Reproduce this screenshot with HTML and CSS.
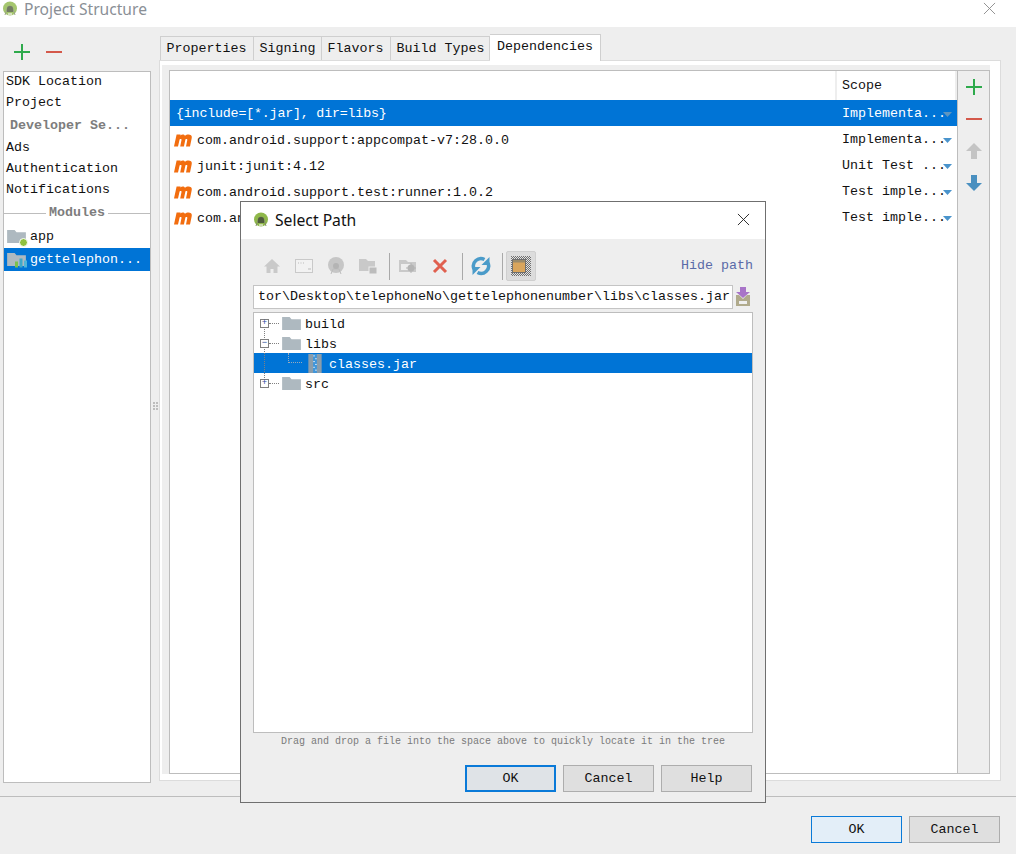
FILE: index.html
```html
<!DOCTYPE html>
<html lang="en">
<head>
<meta charset="utf-8">
<title>Project Structure</title>
<link rel="stylesheet" href="styles.css">
</head>
<body>
<svg class="sprites" width="0" height="0">
  <defs>
    <symbol id="droid" viewBox="0 0 16 16">
      <circle cx="8" cy="7.500" r="7" fill="#8fb84a"/>
      <path d="M3 14 5 8a3 3 0 0 1 6 0l2 6" fill="none" stroke="#7f8a68"/>
      <path d="M5 8a3 3 0 0 1 6 0v3H5z" fill="#4f5b3c"/>
      <path d="M6 13h4" stroke="#dfe6d0" stroke-width="1.500"/>
    </symbol>
    <symbol id="folder" viewBox="0 0 20 16">
      <path d="M0 1h8l2 2.500h10V15H0z" fill="#aeb9c0"/>
    </symbol>
    <symbol id="mvn" viewBox="0 0 18 14">
      <path d="M0 13.500 2.600 1.500H6.600L6.400 2.600C7.600 1.300 10 1 11 2.800 12.400 1.200 15.500 1 17 2.200 18 3 17.900 4.500 17.600 5.800L16 13.500H12L13.300 7C13.500 5.800 12.200 5.600 11.400 6.400L9.900 13.500H6.200L7.500 7C7.700 5.800 6.400 5.600 5.600 6.400L4 13.500z" fill="#f26d0f"/>
    </symbol>
    <symbol id="arrow" viewBox="0 0 9 5">
      <path d="M0 0h9L4.500 5z"/>
    </symbol>
    <pattern id="checker" width="2" height="2" patternUnits="userSpaceOnUse">
      <rect width="2" height="2" fill="#e2e2e2"/>
      <rect width="1" height="1" fill="#6f6f6f"/>
      <rect x="1" y="1" width="1" height="1" fill="#6f6f6f"/>
    </pattern>
  </defs>
</svg>

<div class="window">
  <header class="titlebar">
    <svg class="title-logo"><use href="#droid"/></svg>
    <span class="title-text">Project Structure</span>
    <svg class="title-close" viewBox="0 0 14 14"><path d="M1 1l12 12M13 1 1 13" stroke="#8b8b8b" fill="none"/></svg>
  </header>

  <div class="content">
    <aside class="sidebar">
      <div class="side-tools">
        <svg class="tool" viewBox="0 0 16 16"><path d="M8 0v16M0 8h16" stroke="#2eaa4c" stroke-width="2"/></svg>
        <svg class="tool" viewBox="0 0 16 16"><path d="M0 8h16" stroke="#d4584a" stroke-width="2"/></svg>
      </div>
      <div class="side-list">
        <div class="side-item side-item-first">SDK Location</div>
        <div class="side-item">Project</div>
        <div class="side-heading">Developer Se...</div>
        <div class="side-item side-item-low">Ads</div>
        <div class="side-item">Authentication</div>
        <div class="side-item">Notifications</div>
        <div class="side-sep"><span>Modules</span></div>
        <div class="module">
          <span class="module-icon">
            <svg class="folder-icon"><use href="#folder"/></svg>
            <i class="module-dot"></i>
          </span>
          app
        </div>
        <div class="module module-active">
          <span class="module-icon">
            <svg class="folder-icon"><use href="#folder"/></svg>
            <svg class="module-bars" viewBox="0 0 12 10"><path d="M0 4h3v6H0z" fill="#7cc04b"/><path d="M4.500 1h3v9h-3z" fill="#3fa9c9"/><path d="M9 3h3v7H9z" fill="#4fb6d8"/></svg>
          </span>
          gettelephon...
        </div>
      </div>
    </aside>

    <div class="splitter"><i></i><i></i><i></i><i></i><i></i><i></i></div>

    <main class="main">
      <nav class="tabs">
        <span class="tab">Properties</span>
        <span class="tab">Signing</span>
        <span class="tab tab-flavors">Flavors</span>
        <span class="tab tab-build">Build Types</span>
        <span class="tab tab-active">Dependencies</span>
      </nav>
      <section class="panel">
        <div class="panel-inner">
          <div class="table-box">
            <div class="table">
              <div class="thead">
                <div class="th-name"></div>
                <div class="th-scope">Scope</div>
              </div>
              <div class="row row-active">
                <div class="cell-name cell-plain">{include=[*.jar], dir=libs}</div>
                <div class="cell-scope">Implementa...<svg class="scope-arrow"><use href="#arrow"/></svg></div>
              </div>
              <div class="row">
                <div class="cell-name"><svg class="mvn"><use href="#mvn"/></svg>com.android.support:appcompat-v7:28.0.0</div>
                <div class="cell-scope">Implementa...<svg class="scope-arrow"><use href="#arrow"/></svg></div>
              </div>
              <div class="row">
                <div class="cell-name"><svg class="mvn"><use href="#mvn"/></svg>junit:junit:4.12</div>
                <div class="cell-scope">Unit Test ...<svg class="scope-arrow"><use href="#arrow"/></svg></div>
              </div>
              <div class="row">
                <div class="cell-name"><svg class="mvn"><use href="#mvn"/></svg>com.android.support.test:runner:1.0.2</div>
                <div class="cell-scope">Test imple...<svg class="scope-arrow"><use href="#arrow"/></svg></div>
              </div>
              <div class="row">
                <div class="cell-name"><svg class="mvn"><use href="#mvn"/></svg>com.an</div>
                <div class="cell-scope">Test imple...<svg class="scope-arrow"><use href="#arrow"/></svg></div>
              </div>
            </div>
            <div class="table-tools">
              <svg class="tt" viewBox="0 0 16 16"><path d="M8 0v16M0 8h16" stroke="#2eaa4c" stroke-width="2"/></svg>
              <svg class="tt" viewBox="0 0 16 16"><path d="M0 8h16" stroke="#d4584a" stroke-width="2"/></svg>
              <svg class="tt" viewBox="0 0 16 16"><path d="M8 0l8 8h-5v8H5V8H0z" fill="#c4c4c4"/></svg>
              <svg class="tt" viewBox="0 0 16 16"><path d="M8 16 0 8h5V0h6v8h5z" fill="#4a90c0"/></svg>
            </div>
          </div>
        </div>
      </section>
    </main>
  </div>

  <footer class="footer">
    <button class="btn btn-primary">OK</button>
    <button class="btn">Cancel</button>
  </footer>
</div>

<div class="dialog">
  <header class="dlg-title">
    <svg class="dlg-logo"><use href="#droid"/></svg>
    <span class="dlg-title-text">Select Path</span>
    <svg class="dlg-close" viewBox="0 0 14 14"><path d="M1 1l12 12M13 1 1 13" stroke="#222" fill="none"/></svg>
  </header>
  <div class="dlg-body">
    <div class="dlg-toolbar">
      <svg class="ic" viewBox="0 0 18 18"><path d="M9 2 1 9.500h2.500V16h4v-4h3v4h4V9.500H17z" fill="#c9c9c9"/></svg>
      <svg class="ic" viewBox="0 0 18 18"><rect x="0.500" y="2.500" width="17" height="13" fill="#f2f2f2" stroke="#c9c9c9"/><path d="M3 6h1M5.500 6h1M8 6h1M13 12h3" stroke="#bbb"/></svg>
      <svg class="ic" viewBox="0 0 18 18"><circle cx="9" cy="8" r="8" fill="#c6c6c6"/><path d="M4 17l2-5h6l2 5" fill="none" stroke="#bdbdbd"/><circle cx="9" cy="9" r="3" fill="#b4b4b4"/></svg>
      <svg class="ic" viewBox="0 0 18 18"><path d="M0 2h7l2 2h7v10H0z" fill="#c9c9c9"/><rect x="10" y="10" width="8" height="7" fill="#bcbcbc" stroke="#eee"/></svg>
      <span class="tb-sep"></span>
      <svg class="ic" viewBox="0 0 18 18"><path d="M0 3h7l2 2h8v10H0z" fill="#c9c9c9"/><rect x="2" y="7" width="10" height="6" fill="#eee"/><circle cx="12" cy="11" r="3.500" fill="#b4b4b4"/><path d="M12 6v10M7 11h10" stroke="#b4b4b4"/></svg>
      <svg class="ic ic-del" viewBox="0 0 18 18"><path d="M3 3l12 12M15 3 3 15" stroke="#e0604f" stroke-width="3"/></svg>
      <span class="tb-sep"></span>
      <svg class="ic ic-sync" viewBox="0 0 20 20"><path d="M3 13A7.500 7.500 0 0 1 13.500 3.500" fill="none" stroke="#4a9bc9" stroke-width="3.500"/><path d="M17 7A7.500 7.500 0 0 1 6.500 16.500" fill="none" stroke="#4a9bc9" stroke-width="3.500"/><path d="M18.500 1v8h-8zM1.500 19v-8h8z" fill="#4a9bc9"/></svg>
      <span class="tb-sep"></span>
      <span class="tb-toggle">
        <svg class="ic-toggle" viewBox="0 0 20 20"><rect width="20" height="20" fill="url(#checker)"/><rect x="1.500" y="3.500" width="13" height="13" fill="#d9a55c" stroke="#6f6f6f"/><rect x="2" y="4" width="12" height="2.500" fill="#9a8a6a"/></svg>
      </span>
      <a class="hide-path">Hide path</a>
    </div>

    <div class="path-row">
      <div class="path-input">tor\Desktop\telephoneNo\gettelephonenumber\libs\classes.jar</div>
      <svg class="path-icon" viewBox="0 0 16 20"><path d="M5 0h6v5h4l-7 6-7-6h4z" fill="#a874c8"/><path d="M1 8h3l4 4 4-4h3v11H1z" fill="#b0aa8c"/><rect x="4" y="14" width="8" height="3" fill="#eee"/></svg>
    </div>

    <div class="tree">
      <div class="tree-row">
        <span class="expander">+</span><span class="dots"></span>
        <svg class="tree-folder"><use href="#folder"/></svg><span class="tree-label">build</span>
      </div>
      <div class="tree-row">
        <span class="expander">−</span><span class="dots"></span>
        <svg class="tree-folder"><use href="#folder"/></svg><span class="tree-label">libs</span>
      </div>
      <div class="tree-row tree-row-active">
        <span class="elbow"></span>
        <svg class="jar" viewBox="0 0 14 20"><rect width="14" height="20" fill="#8a9dab"/><rect x="5" width="4" height="20" fill="#3f96db"/><path d="M5 2h2M7 5h2M5 8h2M7 11h2M5 14h2M7 17h2" stroke="#cfe3f2"/></svg>
        <span class="tree-label">classes.jar</span>
      </div>
      <div class="tree-row">
        <span class="expander">+</span><span class="dots"></span>
        <svg class="tree-folder"><use href="#folder"/></svg><span class="tree-label">src</span>
      </div>
      <span class="tree-spine"></span>
    </div>

    <p class="hint">Drag and drop a file into the space above to quickly locate it in the tree</p>

    <div class="dlg-buttons">
      <button class="btn dlg-btn dlg-btn-primary">OK</button>
      <button class="btn dlg-btn">Cancel</button>
      <button class="btn dlg-btn">Help</button>
    </div>
  </div>
</div>
</body>
</html>
```
FILE: styles.css
```css
* { box-sizing: border-box; }
html, body { margin: 0; height: 100%; }
body {
  position: relative;
  width: 1016px;
  height: 854px;
  overflow: hidden;
  background: #eeeeee;
  color: #111;
  font: 13.33px/16px "Liberation Mono", monospace;
}
.sprites { position: absolute; }
.window { display: flex; flex-direction: column; height: 854px; }

.titlebar { display: flex; align-items: center; height: 27px; background: #fff; padding: 0 20px 8px 2px; flex: none; }
.title-logo { width: 16px; height: 16px; opacity: .8; margin-top: -2px; }
.title-text { margin-left: 6px; font: 15.6px/17px "Noto Sans", sans-serif; color: #8a8f96; }
.title-close { width: 13px; height: 13px; margin: -2px 0 0 auto; }

.content { display: flex; height: 769px; flex: none; padding-left: 3px; }
.sidebar { width: 148px; display: flex; flex-direction: column; flex: none; }
.side-tools { display: flex; align-items: center; gap: 16px; height: 44px; padding: 6px 0 0 11px; flex: none; }
.tool { width: 16px; height: 16px; }
.side-list { height: 712px; background: #fff; border: 1px solid #bdbdbd; flex: none; }
.side-item { height: 21.500px; padding-left: 2px; line-height: 20px; }
.side-item-first { height: 20.500px; }
.side-item-low { padding-top: 1px; }
.side-heading { height: 23px; padding-left: 6px; line-height: 24px; font-weight: 700; color: #7d7d7d; }
.side-sep { display: flex; align-items: center; height: 23.500px; gap: 3px; font-weight: 700; color: #7d7d7d; }
.side-sep::before, .side-sep::after { content: ""; flex: 1; height: 1px; background: #bdbdbd; }
.module { display: flex; align-items: center; height: 23px; padding-left: 3px; }
.module-icon { position: relative; width: 23px; height: 16px; flex: none; }
.folder-icon { position: absolute; left: 0; top: 0; width: 19px; height: 15px; }
.module-dot { position: absolute; left: 12px; top: 9px; width: 7px; height: 7px; border-radius: 50%; background: #8fc13e; border: 1px solid #fff; box-sizing: content-box; }
.module-bars { position: absolute; left: 8px; top: 5px; width: 12px; height: 11px; }
.module-active { background: #0074d6; color: #fff; }

.splitter { width: 8px; display: grid; grid-template-columns: 2px 2px; gap: 1px; align-content: center; justify-content: center; padding-bottom: 12px; flex: none; }
.splitter i { width: 2px; height: 2px; background: #bdbdbd; }

.main { flex: none; width: 845px; padding-top: 9px; }
.tabs { display: flex; height: 24px; padding-left: 1px; align-items: flex-end; }
.tab { height: 24px; padding: 0 5.500px; line-height: 23px; border: 1px solid #cfcfcf; border-left-width: 0; border-bottom: 0; background: #eeeeee; }
.tab:first-child { border-left-width: 1px; padding-right: 6.500px; }
.tab-flavors { padding-right: 6.500px; }
.tab-build { padding-right: 4.500px; }
.tab-active { position: relative; z-index: 1; height: 27px; margin-bottom: -1px; background: #fff; line-height: 24px; padding: 0 7px; }
.panel { width: 842px; height: 721px; background: #fff; border: 1px solid #dcdcdc; padding: 4px 10px 6px 2px; }
.panel-inner { height: 709px; background: #eeeeee; padding: 5px 0 0 7px; }
.table-box { display: flex; height: 704px; border: 1px solid #bdbdbd; }
.table { flex: 1; background: #fff; min-width: 0; }
.thead { display: flex; height: 29px; }
.th-name { flex: 1; }
.th-scope { width: 122px; padding-left: 5px; line-height: 30px; border-left: 2px solid #eee; border-right: 2px solid #eee; background: #fff; }
.row { display: flex; height: 26px; align-items: center; padding-top: 2px; }
.row-active { background: #0074d6; color: #fff; }
.cell-name { flex: 1; display: flex; align-items: center; padding: 2px 0 0 4px; white-space: nowrap; overflow: hidden; }
.cell-plain { padding: 0 0 0 6px; letter-spacing: -0.200px; }
.mvn { width: 18px; height: 14px; margin-right: 5px; margin-top: -3px; flex: none; }
.cell-scope { width: 121px; display: flex; align-items: center; padding-left: 6px; white-space: nowrap; }
.scope-arrow { width: 9px; height: 5px; margin-left: -3px; margin-top: 1px; fill: #4a94cc; }
.row-active .scope-arrow { fill: #5f95bf; }
.table-tools { width: 32px; flex: none; display: flex; flex-direction: column; align-items: center; gap: 16px; padding-top: 8px; background: #eeeeee; border-left: 1px solid #bdbdbd; }
.tt { width: 16px; height: 16px; }

.footer { flex: none; height: 58px; border-top: 1px solid #bdbdbd; display: flex; justify-content: flex-end; gap: 7px; padding: 19px 16px 0 0; }
.btn { width: 91px; height: 27px; padding: 0; background: #dfdfdf; border: 1px solid #adadad; border-radius: 0; font: 13.33px/16px "Liberation Mono", monospace; color: #111; }
.btn-primary { background: #e3eef8; border-color: #0a7ad8; }

.dialog { position: absolute; left: 240px; top: 201px; width: 526px; height: 602px; display: flex; flex-direction: column; background: #eeeeee; border: 1px solid #6f6f6f; }
.dlg-title { display: flex; align-items: center; height: 37px; background: #fff; padding: 0 15px 2px 12px; flex: none; }
.dlg-logo { width: 16px; height: 16px; }
.dlg-title-text { margin-left: 6px; font: 15.7px "Noto Sans", sans-serif; color: #111; }
.dlg-close { width: 13px; height: 13px; margin-left: auto; }
.dlg-body { flex: 1; display: flex; flex-direction: column; padding: 11px 12px 0 12px; }
.dlg-toolbar { display: flex; align-items: center; height: 32px; padding-left: 10px; gap: 14px; }
.ic { width: 18px; height: 18px; flex: none; }
.ic-del { margin-right: 1px; }
.ic-sync { width: 20px; height: 20px; margin: 0 -1px; }
.tb-sep { width: 1px; height: 27px; background: #a9a9a9; margin: 0 -5px 0 -2px; flex: none; }
.tb-toggle { display: flex; align-items: center; justify-content: center; width: 30px; height: 30px; background: #dcdcdc; border: 1px solid #cfcfcf; border-radius: 2px; margin-left: -6px; flex: none; }
.ic-toggle { width: 20px; height: 20px; }
.hide-path { margin-left: auto; color: #5a6aa8; }
.path-row { display: flex; align-items: center; gap: 2px; margin-top: 3px; }
.path-input { width: 480px; height: 24px; background: #fff; border: 1px solid #c4c4c4; line-height: 22px; padding-left: 4px; white-space: nowrap; overflow: hidden; }
.path-icon { width: 16px; height: 20px; flex: none; }
.tree { position: relative; margin-top: 3px; width: 500px; height: 421px; background: #fff; border: 1px solid #bdbdbd; }
.tree-row { display: flex; align-items: center; height: 20px; padding-left: 6px; }
.tree-label { position: relative; top: 2px; }
.expander { width: 9px; height: 9px; border: 1px solid #808080; font: 9px/7px "Liberation Mono", monospace; text-align: center; color: #2b4a9a; flex: none; background: #fff; position: relative; z-index: 1; }
.dots { width: 10px; border-top: 1px dotted #808080; margin-right: 3px; flex: none; }
.tree-folder { width: 19px; height: 15px; margin-right: 4px; flex: none; }
.tree-row-active { background: #0074d6; color: #fff; }
.elbow { width: 14px; height: 10px; border-left: 1px dotted #9ab; border-bottom: 1px dotted #9ab; margin: -10px 6px 0 28px; flex: none; }
.jar { width: 14px; height: 19px; margin-right: 7px; flex: none; }
.tree-spine { position: absolute; left: 10px; top: 13px; height: 60px; border-left: 1px dotted #808080; }
.hint { margin: 0; height: 14px; padding-top: 2px; text-align: center; font-size: 10px; line-height: 13px; color: #7a7a7a; }
.dlg-buttons { display: flex; justify-content: flex-end; gap: 7px; margin-top: 18px; padding-right: 1px; }
.dlg-btn-primary { background: #dfe3e7; border: 2px solid #0a7ad8; }
```
